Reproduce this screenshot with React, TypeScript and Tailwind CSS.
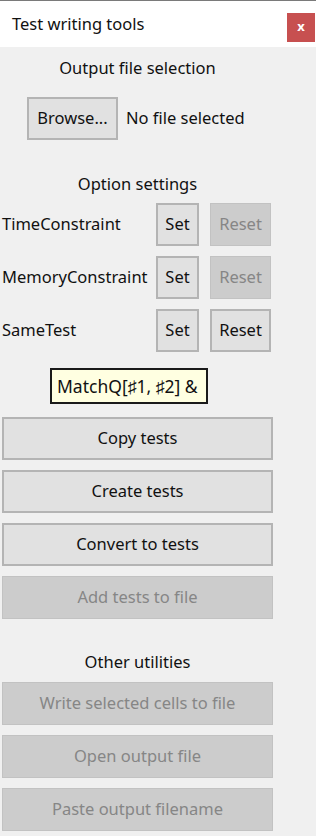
import React from 'react'

const font = { fontFamily: '"Noto Sans", "Open Sans", sans-serif' }

function Btn({ label, disabled, className = '' }: { label: string; disabled?: boolean; className?: string }) {
  return (
    <div
      className={
        'flex items-center justify-center h-[43px] text-[16.5px] whitespace-nowrap ' +
        (disabled
          ? 'bg-[#cccccc] border border-[#c2c2c2] text-[#868686] '
          : 'bg-[#e1e1e1] border-2 border-[#b4b4b4] text-[#111111] ') +
        className
      }
    >
      {label}
    </div>
  )
}

function OptionRow({ name, resetDisabled }: { name: string; resetDisabled?: boolean }) {
  return (
    <div className="flex items-center h-[43px]">
      <div className="w-[154px] text-[16.5px] text-[#111111] leading-none whitespace-nowrap">{name}</div>
      <Btn label="Set" className="w-[43px]" />
      <Btn label="Reset" disabled={resetDisabled} className="w-[61px] ml-[11px]" />
    </div>
  )
}

function SectionLabel({ text, className = '' }: { text: string; className?: string }) {
  return (
    <div className={'h-[24px] leading-[24px] text-center text-[16.5px] text-[#111111] ' + className}>{text}</div>
  )
}

export default function App() {
  return (
    <div className="relative w-[316px] h-[836px] bg-[#f0f0f0] overflow-hidden border-t border-[#7a7a7a]" style={font}>
      {/* Title bar */}
      <div className="h-[46px] bg-white flex items-start justify-between">
        <div className="pl-[12px] pt-[11px] text-[16.5px] text-[#111111]">Test writing tools</div>
        <div className="mt-[12px] mr-[1px] w-[28px] h-[29px] bg-[#c75050] flex items-center justify-center text-white text-[13px] font-bold leading-none pb-[2px]">
          x
        </div>
      </div>

      {/* Body */}
      <div className="ml-[2px] w-[271px] flex flex-col">
        <SectionLabel text="Output file selection" className="mt-[9px]" />
        <div className="mt-[17px] flex items-center h-[43px]">
          <Btn label="Browse..." className="w-[91px] ml-[25px]" />
          <div className="ml-[8px] text-[16.5px] text-[#111111] whitespace-nowrap">No file selected</div>
        </div>

        <SectionLabel text="Option settings" className="mt-[32px]" />
        <div className="mt-[7px] flex flex-col gap-[10px]">
          <OptionRow name="TimeConstraint" resetDisabled />
          <OptionRow name="MemoryConstraint" resetDisabled />
          <OptionRow name="SameTest" />
        </div>

        <SectionLabel text="Creating tests" className="mt-[20px]" />
        <div className="mt-[21px] flex flex-col gap-[10px]">
          <Btn label="Copy tests" />
          <Btn label="Create tests" />
          <Btn label="Convert to tests" />
          <Btn label="Add tests to file" disabled />
        </div>

        <SectionLabel text="Other utilities" className="mt-[31px]" />
        <div className="mt-[8px] flex flex-col gap-[10px]">
          <Btn label="Write selected cells to file" disabled />
          <Btn label="Open output file" disabled />
          <Btn label="Paste output filename" disabled />
        </div>
      </div>

      {/* Tooltip */}
      <div className="absolute left-[50px] top-[367px] w-[158px] h-[36px] bg-[#ffffe1] border-2 border-[#1a1a1a] flex items-center pl-[5px] text-[17.5px] text-[#111111] whitespace-nowrap">
        MatchQ[♯1, ♯2] &amp;
      </div>
    </div>
  )
}
